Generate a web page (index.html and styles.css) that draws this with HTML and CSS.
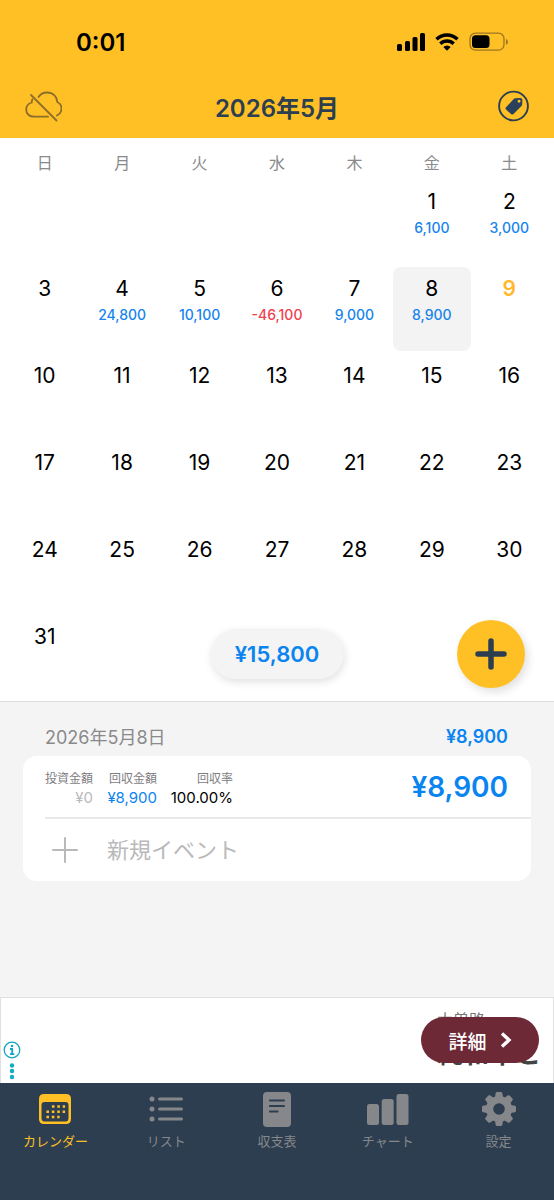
FILE: index.html
```
<!DOCTYPE html>
<html lang="ja">
<head>
<meta charset="utf-8">
<meta name="viewport" content="width=device-width, initial-scale=1">
<title>カレンダー</title>
<link rel="stylesheet" href="styles.css">
</head>
<body>
<div class="app">
  <header class="header">
    <div class="status">
      <span class="clock">0:01</span>
      <svg class="status-icons" width="112" height="20" viewBox="0 0 112 20" aria-hidden="true">
        <g>
          <rect x="0" y="12" width="5" height="7" rx="1.5"/>
          <rect x="8" y="9" width="5" height="10" rx="1.5"/>
          <rect x="15.500" y="5" width="5" height="14" rx="1.5"/>
          <rect x="23" y="1" width="5" height="18" rx="1.5"/>
        </g>
        <g fill="none" stroke="#000" stroke-width="3.400">
          <path d="M39.500 7.300a15 15 0 0 1 21 0"/>
          <path d="M43.300 11.700a9.600 9.600 0 0 1 13.400 0"/>
        </g>
        <path d="M46.300 15a5.300 5.300 0 0 1 7.400 0L50 18.800z"/>
        <rect x="73" y="1.200" width="34" height="17" rx="5.500" fill="none" stroke="#9c7622" stroke-width="1.300"/>
        <rect x="75" y="3.300" width="17.500" height="12.800" rx="3.500"/>
        <path d="M109 7c2.600.8 2.600 5 0 5.800z" fill="#9c7622"/>
      </svg>
    </div>
    <div class="title-bar">
      <button class="icon-button" aria-label="クラウド同期オフ">
        <svg width="38" height="32" viewBox="0 0 38 32" fill="none" stroke="#8c6d2a" stroke-width="1.800" stroke-linecap="round">
          <path d="M14.500 7C16.500 4 19.500 2.500 23 2.500c6 0 10 4 10.300 9.500 2.800 1.300 4.200 3.600 4.200 6.500 0 3.200-1.600 5.600-4.500 7M24 26.700H10C5.500 26.700 2.200 23.800 2.200 19.500c0-3.400 2.200-6 5.500-7 0-1.200.2-2.200.7-3.100"/>
          <path d="M7 5l25.500 25.500"/>
        </svg>
      </button>
      <h1 class="title">2026年5月</h1>
      <button class="icon-button" aria-label="タグ">
        <svg width="32" height="32" viewBox="0 0 32 32">
          <circle cx="15.500" cy="16" r="14.400" fill="none" stroke="#2d3e50" stroke-width="1.900"/>
          <path fill="#2b405a" fill-rule="evenodd" d="M8 17.300L15.700 9q.6-.7 1.500-.8l5-.2q2 0 2.200 2l-.2 4.500q0 .9-.7 1.600l-8 8q-1.300 1-2.500 0L8 19.500q-1-1.200 0-2.200zM21 9.700a1.500 1.500 0 1 0 .1 3 1.500 1.500 0 0 0-.1-3z"/>
        </svg>
      </button>
    </div>
  </header>

  <main class="main">
    <section class="calendar" aria-label="カレンダー">
      <div class="weekdays">
        <span>日</span><span>月</span><span>火</span><span>水</span><span>木</span><span>金</span><span>土</span>
      </div>
      <div class="days">
        <button class="day first-day">1<span class="amount">6,100</span></button>
        <button class="day">2<span class="amount">3,000</span></button>
        <button class="day">3</button>
        <button class="day">4<span class="amount">24,800</span></button>
        <button class="day">5<span class="amount">10,100</span></button>
        <button class="day">6<span class="amount loss">-46,100</span></button>
        <button class="day">7<span class="amount">9,000</span></button>
        <button class="day selected">8<span class="amount">8,900</span></button>
        <button class="day today">9</button>
        <button class="day">10</button>
        <button class="day">11</button>
        <button class="day">12</button>
        <button class="day">13</button>
        <button class="day">14</button>
        <button class="day">15</button>
        <button class="day">16</button>
        <button class="day">17</button>
        <button class="day">18</button>
        <button class="day">19</button>
        <button class="day">20</button>
        <button class="day">21</button>
        <button class="day">22</button>
        <button class="day">23</button>
        <button class="day">24</button>
        <button class="day">25</button>
        <button class="day">26</button>
        <button class="day">27</button>
        <button class="day">28</button>
        <button class="day">29</button>
        <button class="day">30</button>
        <button class="day">31</button>
      </div>
      <div class="total">¥15,800</div>
      <button class="add" aria-label="追加">
        <svg width="32" height="32" viewBox="0 0 32 32" stroke="#2d3e50" stroke-width="5.500" stroke-linecap="round"><path d="M16 3v26M3 16h26"/></svg>
      </button>
    </section>

    <section class="details">
      <div class="details-head">
        <h2 class="date">2026年5月8日</h2>
        <span class="date-total">¥8,900</span>
      </div>
      <div class="card">
        <div class="event">
          <dl class="stats">
            <div><dt>投資金額</dt><dd class="zero">¥0</dd></div>
            <div><dt>回収金額</dt><dd class="gain">¥8,900</dd></div>
            <div class="rate"><dt>回収率</dt><dd>100.00%</dd></div>
          </dl>
          <span class="event-total">¥8,900</span>
        </div>
        <button class="new-event">
          <svg width="26" height="26" viewBox="0 0 26 26" stroke="#b9b9bb" stroke-width="2" stroke-linecap="round"><path d="M13 1v24M1 13h24"/></svg>
          <span>新規イベント</span>
        </button>
      </div>
    </section>
  </main>

  <aside class="ad" aria-label="広告">
    <div class="ad-copy">
      <span class="ad-small">木曽路</span>
      <span class="ad-large">純和牛と</span>
    </div>
    <svg class="ad-info" width="18" height="39" viewBox="0 0 18 39" aria-hidden="true">
      <circle cx="9" cy="9" r="7.800" fill="none" stroke="#12a5c5" stroke-width="1.300"/>
      <circle cx="9" cy="5" r="1.300" fill="#12a5c5"/>
      <path d="M7 8h2.200v5M7 13.200h4.300" fill="none" stroke="#12a5c5" stroke-width="1.800"/>
      <g fill="#12adc2"><circle cx="9" cy="24.500" r="2.200"/><circle cx="9" cy="30" r="2.200"/><circle cx="9" cy="36" r="2.200"/></g>
    </svg>
    <a class="ad-link" href="#detail">詳細
      <svg width="12" height="16" viewBox="0 0 12 16" fill="none" stroke="#fff" stroke-width="3.400"><path d="M2 1.500L9 8l-7 6.500"/></svg>
    </a>
  </aside>

  <nav class="tabs">
    <a class="tab active" href="#calendar">
      <svg width="36" height="36" viewBox="0 0 36 36">
        <path fill="#ffc026" fill-rule="evenodd" d="M7 3h22q5 0 5 5v20q0 5-5 5H7q-5 0-5-5V8q0-5 5-5zM7.500 11q-3 0-3 3v13q0 3.500 3 3.500h21q3 0 3-3.500V14q0-3-3-3z"/>
        <path d="M14.900 15.500h13.200M9.400 20.700h18.700M9.400 26h13.200" fill="none" stroke="#ffc026" stroke-width="2.600" stroke-dasharray="2.600 2.800"/>
      </svg>
      <span>カレンダー</span>
    </a>
    <a class="tab" href="#list">
      <svg width="36" height="36" viewBox="0 0 36 36" fill="#85878b">
        <circle cx="4" cy="8" r="2.500"/><circle cx="4" cy="18" r="2.500"/><circle cx="4" cy="28" r="2.500"/>
        <path d="M11.500 8h22M11.500 18h22M11.500 28h22" stroke="#85878b" stroke-width="3" stroke-linecap="round"/>
      </svg>
      <span>リスト</span>
    </a>
    <a class="tab" href="#balance">
      <svg width="36" height="36" viewBox="0 0 36 36">
        <rect x="4" y="1" width="28" height="35" rx="4" fill="#85878b"/>
        <path d="M11 9.500h14M11 15h14M11 20.500h7.500" stroke="#2d3e50" stroke-width="2.200" stroke-linecap="round"/>
      </svg>
      <span>収支表</span>
    </a>
    <a class="tab" href="#chart">
      <svg width="42" height="36" viewBox="0 0 42 36" fill="#85878b">
        <rect y="13" width="12" height="21" rx="2.500"/><rect x="14.700" y="8" width="12" height="26" rx="2.500"/><rect x="29.500" y="3" width="12" height="31" rx="2.500"/>
      </svg>
      <span>チャート</span>
    </a>
    <a class="tab" href="#settings">
      <svg width="36" height="36" viewBox="0 0 36 36">
        <g fill="#85878b">
          <g id="teeth"><path id="tooth" d="M13.700 8l1-6q.3-1 1.300-1h4q1 0 1.300 1l1 6v20l-1 6q-.3 1-1.300 1h-4q-1 0-1.300-1l-1-6z"/>
          <use href="#tooth" transform="rotate(90 18 18)"/></g>
          <use href="#teeth" transform="rotate(45 18 18)"/>
          <circle cx="18" cy="18" r="13"/>
        </g>
        <circle cx="18" cy="18" r="5.800" fill="#2d3e50"/>
      </svg>
      <span>設定</span>
    </a>
  </nav>
</div>
</body>
</html>
```

FILE: styles.css
```
* {
  box-sizing: border-box;
}

body {
  margin: 0;
  font-family: Inter, "Noto Sans CJK JP", sans-serif;
  color: #000;
  background: #f4f4f4;
}

button {
  padding: 0;
  border: 0;
  background: none;
  color: inherit;
  font: inherit;
  cursor: pointer;
}

a {
  color: inherit;
  text-decoration: none;
}

svg {
  display: block;
  flex: none;
}

.app {
  display: flex;
  flex-direction: column;
  min-height: 100vh;
}

.header {
  padding: 24px 24px 0;
  height: 138px;
  background: #ffc026;
}

.status {
  display: flex;
  align-items: center;
  justify-content: space-between;
  height: 36px;
  padding: 0 21px 0 52px;
}

.clock {
  font-size: 24px;
  font-weight: 600;
}

.title-bar {
  display: flex;
  align-items: center;
  justify-content: space-between;
  height: 60px;
  margin-top: 16px;
}

.icon-button {
  display: flex;
  width: 38px;
}

.icon-button:last-child {
  justify-content: flex-end;
}

.title {
  margin: 0;
  color: #2d3e50;
  font-size: 24px;
  font-weight: 600;
}

.main {
  display: flex;
  flex: 1;
  flex-direction: column;
}

.calendar {
  position: relative;
  padding: 0 6px 2px;
  border-bottom: 1px solid #dcdcdc;
  background: #fff;
}

.weekdays,
.days {
  display: grid;
  grid-template-columns: repeat(7, 1fr);
}

.weekdays {
  height: 42px;
  padding-top: 13px;
  color: #8a8a8c;
  font-size: 16px;
  line-height: 24px;
  text-align: center;
}

.days {
  grid-auto-rows: 84px;
  row-gap: 3px;
}

.day {
  display: flex;
  flex-direction: column;
  align-items: center;
  padding-top: 8px;
  border-radius: 8px;
  font-size: 21px;
  line-height: 28px;
}

.first-day {
  grid-column: 6;
}

.selected {
  background: #f3f3f3;
}

.today {
  color: #ffb92a;
  font-weight: 600;
}

.amount {
  margin-top: 2px;
  color: #1684ec;
  font-size: 14px;
  font-weight: 500;
  line-height: 20px;
}

.loss {
  color: #f0414f;
}

.total {
  position: absolute;
  bottom: 22px;
  left: 50%;
  padding: 0 24px;
  border-radius: 25px;
  background: #f4f4f4;
  box-shadow: 1px 3px 9px rgba(0, 0, 0, 0.12);
  color: #0a84f0;
  font-size: 22px;
  font-weight: 600;
  line-height: 50px;
  transform: translateX(-50%);
}

.add {
  position: absolute;
  right: 29px;
  bottom: 13px;
  display: grid;
  place-items: center;
  width: 68px;
  height: 68px;
  border-radius: 50%;
  background: #ffc026;
  box-shadow: 3px 4px 9px rgba(0, 0, 0, 0.12);
}

.details {
  flex: 1;
  padding: 18px 23px;
  background: #f4f4f4;
}

.details-head {
  display: flex;
  align-items: center;
  justify-content: space-between;
  height: 32px;
  padding: 0 23px 0 22px;
}

.date {
  margin: 0;
  color: #8a8a8c;
  font-size: 18px;
  font-weight: 400;
}

.date-total {
  color: #0a84f0;
  font-size: 18px;
  font-weight: 600;
}

.card {
  margin-top: 4px;
  padding-left: 22px;
  border-radius: 14px;
  background: #fff;
}

.event {
  display: flex;
  align-items: center;
  justify-content: space-between;
  height: 63px;
  padding-right: 23px;
  border-bottom: 2px solid #e8e8e8;
}

.stats {
  display: flex;
  gap: 12px;
  margin: 0;
  padding-top: 4px;
  text-align: right;
}

.stats div {
  min-width: 52px;
}

.stats div:first-child {
  min-width: 48px;
}

.stats .rate {
  min-width: 64px;
}

.stats dt {
  color: #7d7d7f;
  font-size: 12px;
  line-height: 18px;
}

.stats dd {
  margin: 0;
  font-size: 15px;
  line-height: 20px;
}

.stats .zero {
  color: #bababc;
}

.stats .gain {
  color: #0a84f0;
}

.event-total {
  color: #0a84f0;
  font-size: 28px;
  font-weight: 600;
}

.new-event {
  display: flex;
  gap: 29px;
  align-items: center;
  width: 100%;
  height: 62px;
  padding-left: 7px;
  color: #b9b9bb;
  font-size: 22px;
}

.new-event span {
  padding-bottom: 4px;
}

.ad {
  position: relative;
  height: 86px;
  border: 1px solid #e0e0e2;
  border-bottom: 0;
  background: #fff;
}

.ad-copy {
  display: flex;
  flex-direction: column;
  align-items: flex-start;
  width: 116px;
  margin-left: auto;
  padding-top: 10px;
}

.ad-small {
  color: #777;
  font-size: 16px;
  line-height: 24px;
}

.ad-large {
  padding-top: 6px;
  color: #444;
  font-size: 26px;
  font-weight: 700;
  line-height: 32px;
}

.ad-info {
  position: absolute;
  bottom: 3px;
  left: 2px;
}

.ad-link {
  position: absolute;
  top: 19px;
  right: 14px;
  display: flex;
  gap: 13px;
  align-items: center;
  justify-content: center;
  width: 118px;
  height: 46px;
  border-radius: 23px;
  background: #6d2936;
  color: #fff;
  font-size: 19px;
  font-weight: 500;
}

.tabs {
  display: grid;
  grid-template-columns: repeat(5, 1fr);
  height: 117px;
  padding-top: 8px;
  background: #2d3e50;
}

.tab {
  display: flex;
  flex-direction: column;
  gap: 4px;
  align-items: center;
  color: #85878b;
  font-size: 13px;
  line-height: 20px;
}

.tab.active {
  color: #ffc026;
}
```
